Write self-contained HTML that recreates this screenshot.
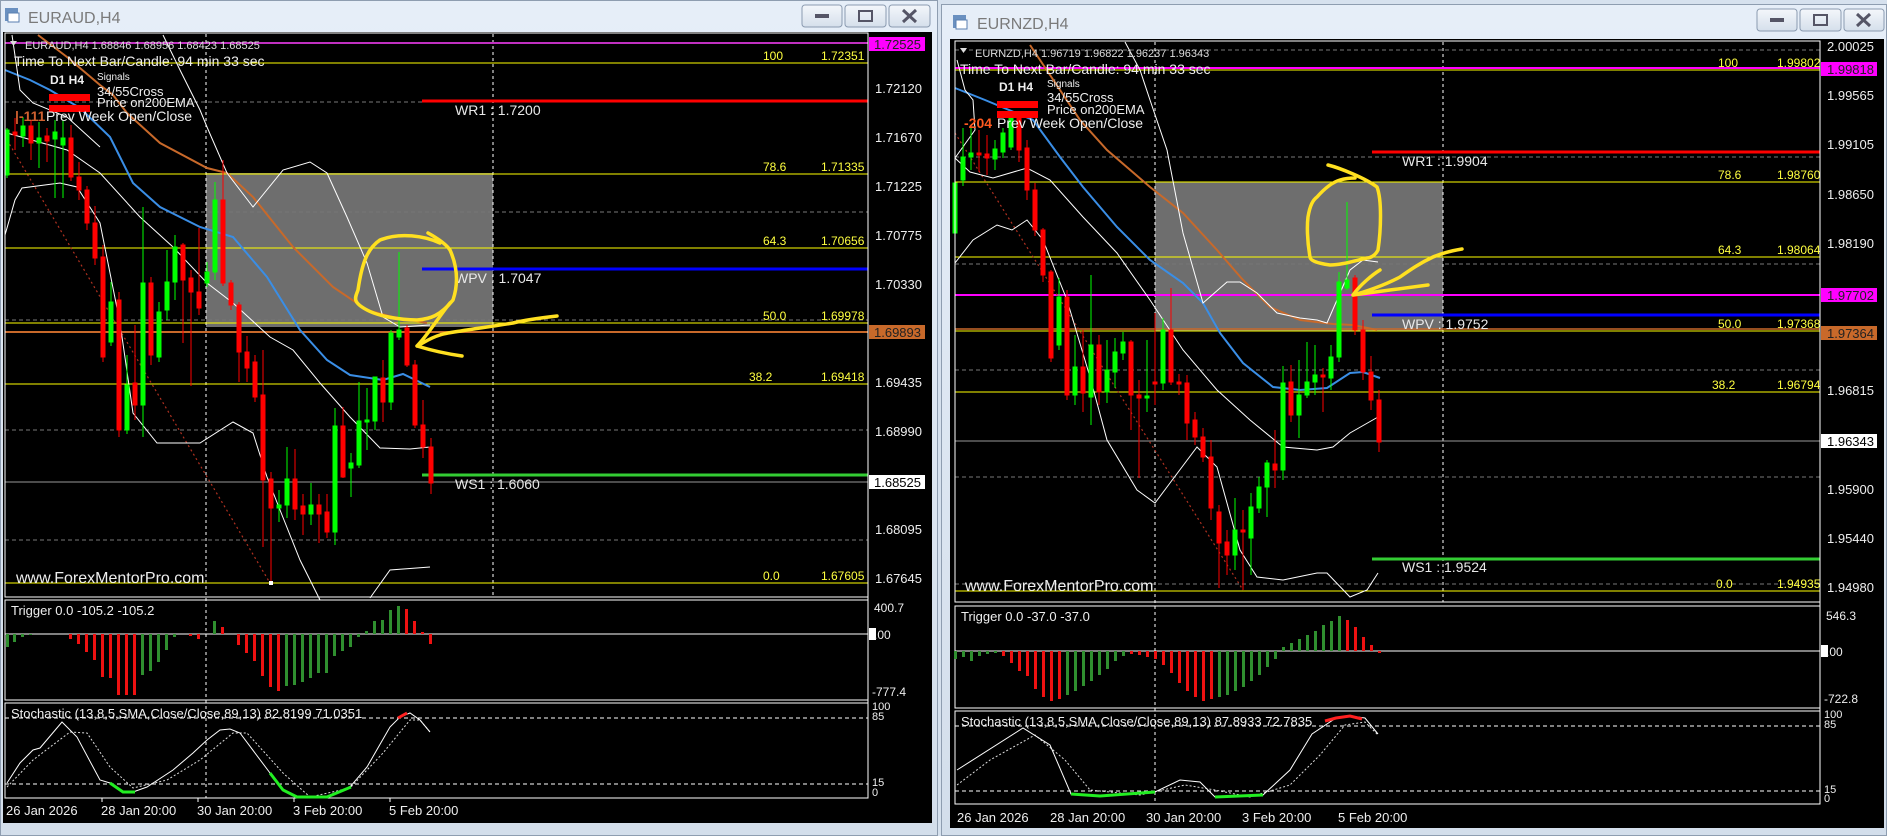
<!DOCTYPE html>
<html><head><meta charset="utf-8"><style>
html,body{margin:0;padding:0;background:#d6e1ee;}
svg{display:block;font-family:"Liberation Sans",sans-serif;}
</style></head><body>
<svg width="1887" height="836" viewBox="0 0 1887 836" xmlns="http://www.w3.org/2000/svg">
<defs>
<linearGradient id="tb" x1="0" y1="0" x2="0" y2="1"><stop offset="0" stop-color="#e6eef8"/><stop offset="1" stop-color="#d3deeb"/></linearGradient>
<linearGradient id="btn" x1="0" y1="0" x2="0" y2="1"><stop offset="0" stop-color="#f4f7fb"/><stop offset="1" stop-color="#d5dfeb"/></linearGradient>
</defs>
<rect width="1887" height="836" fill="#d6e1ee"/>
<!-- LEFT WINDOW -->
<rect x="0" y="0" width="938" height="836" fill="url(#tb)"/>
<rect x="0.5" y="0.5" width="937" height="835" fill="none" stroke="#8e9db0"/>
<rect x="5" y="8" width="13" height="13" fill="#6a90c0"/><rect x="8" y="13" width="11" height="9" fill="#fff" stroke="#5a7fb0"/>
<text x="28" y="23" font-size="16" fill="#7a7a7a">EURAUD,H4</text>
<g stroke="#8b9bb0" fill="url(#btn)"><rect x="802" y="5" width="40" height="22" rx="3"/><rect x="845" y="5" width="41" height="22" rx="3"/><rect x="889" y="5" width="41" height="22" rx="3"/></g>
<rect x="815" y="14" width="14" height="4" fill="#556" /><rect x="859" y="11" width="13" height="10" fill="none" stroke="#556" stroke-width="2"/>
<path d="M903 10 L916 22 M916 10 L903 22" stroke="#556" stroke-width="3"/>
<rect x="3" y="32" width="929" height="791" fill="#000"/>

<!-- left main chart -->
<rect x="206" y="173" width="287" height="154" fill="#6e6e6e"/>
<g stroke="#777" stroke-dasharray="4,3" stroke-width="1"><line x1="5" y1="102" x2="868" y2="102"/><line x1="5" y1="212" x2="868" y2="212"/><line x1="5" y1="320" x2="868" y2="320"/><line x1="5" y1="430" x2="868" y2="430"/><line x1="5" y1="540" x2="868" y2="540"/></g>
<g stroke="#fff" stroke-dasharray="3,3"><line x1="206" y1="34" x2="206" y2="798"/><line x1="493" y1="34" x2="493" y2="597"/></g>
<g stroke="#ffff00" stroke-width="1"><line x1="5" y1="63" x2="868" y2="63"/><line x1="5" y1="174" x2="868" y2="174"/><line x1="5" y1="248" x2="868" y2="248"/><line x1="5" y1="323" x2="868" y2="323"/><line x1="5" y1="384" x2="868" y2="384"/><line x1="5" y1="583" x2="868" y2="583"/></g>
<line x1="5" y1="43" x2="868" y2="43" stroke="#c030c0" stroke-width="2"/>
<line x1="5" y1="332" x2="868" y2="332" stroke="#c8692a" stroke-width="2"/>
<line x1="5" y1="482" x2="868" y2="482" stroke="#999" stroke-width="1"/>
<line x1="422" y1="101" x2="868" y2="101" stroke="#ff0000" stroke-width="3"/>
<line x1="422" y1="269" x2="868" y2="269" stroke="#0000ff" stroke-width="3"/>
<line x1="422" y1="475" x2="868" y2="475" stroke="#33cc33" stroke-width="3"/>
<g font-size="12" fill="#ffff40"><text x="763" y="60">100</text><text x="821" y="60">1.72351</text><text x="763" y="171">78.6</text><text x="821" y="171">1.71335</text><text x="763" y="245">64.3</text><text x="821" y="245">1.70656</text><text x="763" y="320">50.0</text><text x="821" y="320">1.69978</text><text x="749" y="381">38.2</text><text x="821" y="381">1.69418</text><text x="763" y="580">0.0</text><text x="821" y="580">1.67605</text></g>
<g font-size="14" fill="#e8e8e8"><text x="455" y="115">WR1 : 1.7200</text><text x="455" y="283">WPV : 1.7047</text><text x="455" y="489">WS1 : 1.6060</text></g>
<!-- indicators left -->
<polyline fill="none" stroke="#b03020" stroke-width="1.2" stroke-dasharray="2,3" points="7,140 270,583"/>
<polyline fill="none" stroke="#c8692a" stroke-width="2" points="38,35 67,57 100,85 113,95 127,113 160,143 207,168 227,173 253,197 293,247 333,287 367,310 393,317 427,323"/>
<polyline fill="none" stroke="#3a8ee6" stroke-width="2" points="5,70 30,80 50,90 80,108 110,137 133,183 160,207 200,227 233,237 267,277 300,330 327,360 350,375 383,380 403,374 430,387"/>
<g fill="none" stroke="#fff" stroke-width="1">
<polyline points="5,235 15,200 22,188 60,183 77,187 100,223 120,323 133,413 157,443 200,443 233,422 253,433 267,477 280,510 300,560 320,600"/>
<polyline points="370,598 390,570 430,567"/>
<polyline points="7,133 67,150 100,173 140,217 173,247 207,283 233,303 270,337 293,350 320,383 350,417 380,448 410,449 430,447"/>
<polyline points="12,35 20,90 33,103 67,117 100,147"/>
<polyline points="163,35 180,70 200,110 207,127 227,173 253,207 283,170 310,162 327,173 347,217 367,263 383,317 400,327 430,325"/>
</g>
<!-- left candles -->
<g stroke="#00ff00" fill="#00ff00">
<line x1="7" y1="128" x2="7" y2="178"/><rect x="5" y="130" width="4" height="45"/>
<line x1="23" y1="117" x2="23" y2="147"/><rect x="21" y="126" width="4" height="10"/>
<line x1="39" y1="122" x2="39" y2="168"/><rect x="37" y="138" width="4" height="5"/>
<line x1="55" y1="120" x2="55" y2="198"/><rect x="53" y="132" width="4" height="7"/>
<line x1="63" y1="120" x2="63" y2="198"/><rect x="61" y="138" width="4" height="7"/>
<line x1="111" y1="282" x2="111" y2="346"/><rect x="109" y="302" width="4" height="40"/>
<line x1="127" y1="355" x2="127" y2="434"/><rect x="125" y="385" width="4" height="45"/>
<line x1="143" y1="207" x2="143" y2="437"/><rect x="141" y="283" width="4" height="122"/>
<line x1="159" y1="302" x2="159" y2="362"/><rect x="157" y="312" width="4" height="45"/>
<line x1="167" y1="250" x2="167" y2="320"/><rect x="165" y="282" width="4" height="28"/>
<line x1="175" y1="235" x2="175" y2="300"/><rect x="173" y="247" width="4" height="35"/>
<line x1="207" y1="262" x2="207" y2="287"/><rect x="205" y="272" width="4" height="11"/>
<line x1="215" y1="182" x2="215" y2="280"/><rect x="213" y="200" width="4" height="72"/>
<line x1="279" y1="490" x2="279" y2="522"/><rect x="277" y="505" width="4" height="3"/>
<line x1="287" y1="447" x2="287" y2="518"/><rect x="285" y="479" width="4" height="26"/>
<line x1="311" y1="483" x2="311" y2="525"/><rect x="309" y="505" width="4" height="9"/>
<line x1="335" y1="408" x2="335" y2="545"/><rect x="333" y="426" width="4" height="106"/>
<line x1="351" y1="453" x2="351" y2="497"/><rect x="349" y="463" width="4" height="5"/>
<line x1="359" y1="382" x2="359" y2="468"/><rect x="357" y="421" width="4" height="44"/>
<line x1="367" y1="388" x2="367" y2="450"/><rect x="365" y="420" width="4" height="2"/>
<line x1="375" y1="377" x2="375" y2="430"/><rect x="373" y="377" width="4" height="44"/>
<line x1="391" y1="330" x2="391" y2="410"/><rect x="389" y="333" width="4" height="69"/>
<line x1="399" y1="252" x2="399" y2="340"/><rect x="397" y="330" width="4" height="7"/>
</g>
<g stroke="#ff0000" fill="#ff0000">
<line x1="15" y1="118" x2="15" y2="150"/><rect x="13" y="132" width="4" height="3"/>
<line x1="31" y1="120" x2="31" y2="160"/><rect x="29" y="126" width="4" height="17"/>
<line x1="47" y1="128" x2="47" y2="162"/><rect x="45" y="136" width="4" height="5"/>
<line x1="71" y1="125" x2="71" y2="181"/><rect x="69" y="138" width="4" height="39"/>
<line x1="79" y1="162" x2="79" y2="200"/><rect x="77" y="177" width="4" height="13"/>
<line x1="87" y1="186" x2="87" y2="230"/><rect x="85" y="190" width="4" height="33"/>
<line x1="95" y1="206" x2="95" y2="265"/><rect x="93" y="223" width="4" height="35"/>
<line x1="103" y1="245" x2="103" y2="362"/><rect x="101" y="257" width="4" height="100"/>
<line x1="119" y1="292" x2="119" y2="437"/><rect x="117" y="300" width="4" height="130"/>
<line x1="135" y1="325" x2="135" y2="420"/><rect x="133" y="383" width="4" height="22"/>
<line x1="151" y1="277" x2="151" y2="365"/><rect x="149" y="283" width="4" height="72"/>
<line x1="183" y1="243" x2="183" y2="343"/><rect x="181" y="245" width="4" height="35"/>
<line x1="191" y1="270" x2="191" y2="386"/><rect x="189" y="278" width="4" height="14"/>
<line x1="199" y1="228" x2="199" y2="315"/><rect x="197" y="292" width="4" height="16"/>
<line x1="223" y1="160" x2="223" y2="286"/><rect x="221" y="200" width="4" height="83"/>
<line x1="231" y1="280" x2="231" y2="310"/><rect x="229" y="283" width="4" height="22"/>
<line x1="239" y1="302" x2="239" y2="382"/><rect x="237" y="305" width="4" height="47"/>
<line x1="247" y1="336" x2="247" y2="382"/><rect x="245" y="352" width="4" height="16"/>
<line x1="255" y1="355" x2="255" y2="402"/><rect x="253" y="362" width="4" height="35"/>
<line x1="263" y1="350" x2="263" y2="547"/><rect x="261" y="395" width="4" height="85"/>
<line x1="271" y1="472" x2="271" y2="583"/><rect x="269" y="479" width="4" height="29"/>
<line x1="295" y1="449" x2="295" y2="520"/><rect x="293" y="479" width="4" height="30"/>
<line x1="303" y1="494" x2="303" y2="535"/><rect x="301" y="506" width="4" height="8"/>
<line x1="319" y1="494" x2="319" y2="543"/><rect x="317" y="505" width="4" height="9"/>
<line x1="327" y1="494" x2="327" y2="538"/><rect x="325" y="512" width="4" height="20"/>
<line x1="343" y1="407" x2="343" y2="478"/><rect x="341" y="426" width="4" height="51"/>
<line x1="383" y1="360" x2="383" y2="422"/><rect x="381" y="378" width="4" height="24"/>
<line x1="407" y1="325" x2="407" y2="367"/><rect x="405" y="328" width="4" height="37"/>
<line x1="415" y1="360" x2="415" y2="428"/><rect x="413" y="365" width="4" height="60"/>
<line x1="423" y1="400" x2="423" y2="458"/><rect x="421" y="425" width="4" height="22"/>
<line x1="431" y1="438" x2="431" y2="494"/><rect x="429" y="447" width="4" height="36"/>
</g>
<rect x="269" y="581" width="4" height="4" fill="#fff"/>
<!-- annotations left -->
<g fill="none" stroke="#ffe020" stroke-width="3.5" stroke-linecap="round" stroke-linejoin="round">
<path d="M440 243 C425 236 400 232 380 240 C368 248 362 262 358 290 C355 298 352 302 367 310 C378 316 400 320 417 320 C430 319 440 316 453 300 C458 285 458 268 450 250 C446 244 437 238 428 233"/>
<path d="M557 316 C540 318 525 320 513 323 C495 326 480 328 467 330 C455 332 445 333 440 335 C430 338 425 342 417 346 M417 346 C428 335 440 315 450 303 M417 346 C430 350 448 354 462 356"/>
</g>
<!-- left text overlay -->
<path d="M10 41 L17 41 L13.5 46 Z" fill="#ddd"/>
<text x="25" y="49" font-size="11" fill="#ddd">EURAUD,H4  1.68846 1.68956 1.68423 1.68525</text>
<text x="14" y="66" font-size="14" fill="#eee">Time To Next Bar/Candle: 94 min 33 sec</text>
<text x="50" y="84" font-size="12" font-weight="bold" fill="#eee">D1  H4</text>
<text x="97" y="80" font-size="10" fill="#eee">Signals</text>
<text x="97" y="96" font-size="13" fill="#eee">34/55Cross</text>
<text x="97" y="107" font-size="13" fill="#eee">Price on200EMA</text>
<rect x="49" y="94" width="41" height="7" fill="#ff0000"/><rect x="49" y="105" width="41" height="7" fill="#ff0000"/>
<text x="15" y="121" font-size="14" font-weight="bold" fill="#d06030">|-111</text>
<text x="46" y="121" font-size="14" fill="#eee">Prev Week Open/Close</text>
<text x="16" y="583" font-size="16" fill="#eee">www.ForexMentorPro.com</text>
<!-- left axis -->
<line x1="868" y1="34" x2="868" y2="798" stroke="#fff"/>
<g font-size="13" fill="#eee"><text x="875" y="93">1.72120</text><text x="875" y="142">1.71670</text><text x="875" y="191">1.71225</text><text x="875" y="240">1.70775</text><text x="875" y="289">1.70330</text><text x="875" y="387">1.69435</text><text x="875" y="436">1.68990</text><text x="875" y="534">1.68095</text><text x="875" y="583">1.67645</text></g>
<rect x="869" y="37" width="56" height="14" fill="#ff00ff"/><text x="874" y="49" font-size="13" fill="#222">1.72525</text>
<rect x="869" y="325" width="56" height="14" fill="#c8692a"/><text x="874" y="337" font-size="13" fill="#222">1.69893</text>
<rect x="869" y="475" width="56" height="14" fill="#fff"/><text x="874" y="487" font-size="13" fill="#000">1.68525</text>
<rect x="5" y="33" width="863" height="564" fill="none" stroke="#fff"/>
<!-- left trigger -->
<rect x="5" y="600" width="863" height="100" fill="none" stroke="#fff"/>
<line x1="5" y1="634" x2="868" y2="634" stroke="#fff"/>
<text x="11" y="615" font-size="13" fill="#eee">Trigger 0.0 -105.2 -105.2</text>
<text x="874" y="612" font-size="12" fill="#eee">400.7</text><rect x="869" y="628" width="7" height="12" fill="#fff"/><text x="874" y="639" font-size="12" fill="#eee">.00</text><text x="872" y="696" font-size="12" fill="#eee">-777.4</text>
<g fill="#2f8f2f"><rect x="6" y="634" width="3" height="13"/><rect x="13" y="634" width="3" height="8"/><rect x="21" y="634" width="3" height="3"/><rect x="29" y="634" width="3" height="1"/><rect x="141" y="634" width="3" height="41"/><rect x="149" y="634" width="3" height="37"/><rect x="157" y="634" width="3" height="28"/><rect x="165" y="634" width="3" height="16"/><rect x="173" y="634" width="3" height="3"/><rect x="213" y="621" width="3" height="13"/><rect x="285" y="634" width="3" height="52"/><rect x="293" y="634" width="3" height="51"/><rect x="301" y="634" width="3" height="48"/><rect x="309" y="634" width="3" height="44"/><rect x="317" y="634" width="3" height="39"/><rect x="325" y="634" width="3" height="39"/><rect x="333" y="634" width="3" height="22"/><rect x="341" y="634" width="3" height="17"/><rect x="349" y="634" width="3" height="13"/><rect x="357" y="634" width="3" height="3"/><rect x="365" y="631" width="3" height="3"/><rect x="373" y="621" width="3" height="13"/><rect x="381" y="620" width="3" height="14"/><rect x="389" y="610" width="3" height="24"/><rect x="397" y="606" width="3" height="28"/></g>
<g fill="#ee1111"><rect x="69" y="634" width="3" height="5"/><rect x="77" y="634" width="3" height="10"/><rect x="85" y="634" width="3" height="18"/><rect x="93" y="634" width="3" height="26"/><rect x="101" y="634" width="3" height="43"/><rect x="109" y="634" width="3" height="44"/><rect x="117" y="634" width="3" height="61"/><rect x="125" y="634" width="3" height="61"/><rect x="133" y="634" width="3" height="61"/><rect x="189" y="634" width="3" height="2"/><rect x="197" y="634" width="3" height="5"/><rect x="221" y="627" width="3" height="7"/><rect x="237" y="634" width="3" height="11"/><rect x="245" y="634" width="3" height="19"/><rect x="253" y="634" width="3" height="27"/><rect x="261" y="634" width="3" height="42"/><rect x="269" y="634" width="3" height="53"/><rect x="277" y="634" width="3" height="57"/><rect x="405" y="609" width="3" height="25"/><rect x="413" y="621" width="3" height="13"/><rect x="421" y="632" width="3" height="2"/><rect x="429" y="634" width="3" height="10"/></g>
<!-- left stoch -->
<rect x="5" y="703" width="863" height="95" fill="none" stroke="#fff"/>
<g stroke="#fff" stroke-dasharray="4,3"><line x1="5" y1="718" x2="868" y2="718"/><line x1="5" y1="784" x2="868" y2="784"/></g>
<text x="11" y="718" font-size="13" fill="#eee">Stochastic (13,8,5,SMA,Close/Close,89,13) 82.8199 71.0351</text>
<g font-size="11" fill="#eee"><text x="872" y="710">100</text><text x="872" y="720">85</text><text x="872" y="786">15</text><text x="872" y="796">0</text></g>
<polyline fill="none" stroke="#ddd" stroke-dasharray="2,2" points="7,787 33,760 70,732 87,733 110,767 133,788 167,780 200,760 233,733 247,733 283,773 310,797 350,788 383,753 410,720 420,720 430,732"/>
<polyline fill="none" stroke="#fff" points="7,783 20,763 33,750 40,748 62,722 77,737 100,780 110,783 123,792 133,792 147,787 173,770 193,753 207,740 220,730 230,729 240,733 270,773 283,790 297,797 327,797 350,787 367,767 390,727 400,717 410,713 420,720 430,732"/>
<polyline fill="none" stroke="#22ee22" stroke-width="3" points="110,783 123,792 135,792"/>
<polyline fill="none" stroke="#22ee22" stroke-width="3" points="270,773 283,790 297,797 327,797 351,787"/>
<polyline fill="none" stroke="#ff2020" stroke-width="3" points="398,718 407,713"/>
<g font-size="13" fill="#eee"><text x="6" y="815">26 Jan 2026</text><text x="101" y="815">28 Jan 20:00</text><text x="197" y="815">30 Jan 20:00</text><text x="293" y="815">3 Feb 20:00</text><text x="389" y="815">5 Feb 20:00</text></g>
<g stroke="#fff"><line x1="102" y1="798" x2="102" y2="802"/><line x1="198" y1="798" x2="198" y2="802"/><line x1="294" y1="798" x2="294" y2="802"/><line x1="390" y1="798" x2="390" y2="802"/></g>

<!-- RIGHT WINDOW -->
<rect x="941" y="4" width="946" height="832" fill="url(#tb)"/>
<rect x="941.5" y="4.5" width="945" height="831" fill="none" stroke="#8e9db0"/>
<rect x="953" y="15" width="13" height="13" fill="#6a90c0"/><rect x="956" y="20" width="11" height="9" fill="#fff" stroke="#5a7fb0"/>
<text x="977" y="29" font-size="16" fill="#7a7a7a">EURNZD,H4</text>
<g stroke="#8b9bb0" fill="url(#btn)"><rect x="1757" y="9" width="40" height="22" rx="3"/><rect x="1800" y="9" width="41" height="22" rx="3"/><rect x="1844" y="9" width="40" height="22" rx="3"/></g>
<rect x="1770" y="18" width="14" height="4" fill="#556"/><rect x="1814" y="15" width="13" height="10" fill="none" stroke="#556" stroke-width="2"/>
<path d="M1857 14 L1870 26 M1870 14 L1857 26" stroke="#556" stroke-width="3"/>
<rect x="950" y="39" width="934" height="789" fill="#000"/>
<rect x="1155" y="182" width="288" height="149" fill="#6e6e6e"/>
<g stroke="#777" stroke-dasharray="4,3"><line x1="955" y1="50" x2="1820" y2="50"/><line x1="955" y1="157" x2="1820" y2="157"/><line x1="955" y1="264" x2="1820" y2="264"/><line x1="955" y1="370" x2="1820" y2="370"/><line x1="955" y1="477" x2="1820" y2="477"/><line x1="955" y1="584" x2="1820" y2="584"/></g>
<g stroke="#fff" stroke-dasharray="3,3"><line x1="1155" y1="42" x2="1155" y2="804"/><line x1="1443" y1="42" x2="1443" y2="602"/></g>
<g stroke="#ffff00"><line x1="955" y1="70" x2="1820" y2="70"/><line x1="955" y1="182" x2="1820" y2="182"/><line x1="955" y1="257" x2="1820" y2="257"/><line x1="955" y1="331" x2="1820" y2="331"/><line x1="955" y1="392" x2="1820" y2="392"/><line x1="955" y1="591" x2="1820" y2="591"/></g>
<line x1="955" y1="68" x2="1820" y2="68" stroke="#ff00ff" stroke-width="2"/>
<line x1="955" y1="295" x2="1820" y2="295" stroke="#ff00ff" stroke-width="2"/>
<line x1="955" y1="329" x2="1820" y2="329" stroke="#c8692a" stroke-width="1.5"/>
<line x1="955" y1="441" x2="1820" y2="441" stroke="#999"/>
<line x1="1372" y1="152" x2="1820" y2="152" stroke="#ff0000" stroke-width="3"/>
<line x1="1372" y1="315" x2="1820" y2="315" stroke="#0000ff" stroke-width="3"/>
<line x1="1372" y1="559" x2="1820" y2="559" stroke="#33cc33" stroke-width="3"/>
<g font-size="12" fill="#ffff40"><text x="1718" y="67">100</text><text x="1777" y="67">1.99802</text><text x="1718" y="179">78.6</text><text x="1777" y="179">1.98760</text><text x="1718" y="254">64.3</text><text x="1777" y="254">1.98064</text><text x="1718" y="328">50.0</text><text x="1777" y="328">1.97368</text><text x="1712" y="389">38.2</text><text x="1777" y="389">1.96794</text><text x="1716" y="588">0.0</text><text x="1777" y="588">1.94935</text></g>
<g font-size="14" fill="#e8e8e8"><text x="1402" y="166">WR1 : 1.9904</text><text x="1402" y="329">WPV : 1.9752</text><text x="1402" y="572">WS1 : 1.9524</text></g>
<polyline fill="none" stroke="#b03020" stroke-width="1.2" stroke-dasharray="2,3" points="955,133 1243,590"/>
<polyline fill="none" stroke="#c8692a" stroke-width="2" points="1030,45 1060,90 1080,120 1107,150 1150,187 1183,213 1217,250 1243,280 1270,307 1300,320 1333,324 1353,325 1377,330"/>
<polyline fill="none" stroke="#3a8ee6" stroke-width="2" points="955,88 985,100 1033,120 1060,157 1083,187 1117,227 1150,260 1183,283 1203,303 1220,333 1243,363 1273,387 1300,390 1327,388 1350,373 1363,372 1380,378"/>
<g fill="none" stroke="#fff">
<polyline points="957,60 965,90 973,100 975,130 955,158"/>
<polyline points="955,158 970,172 993,178 1027,168 1050,180 1083,217 1117,253 1150,300 1183,350 1217,390 1250,420 1283,447 1317,450 1333,447 1350,433 1378,417"/>
<polyline points="955,263 973,240 997,225 1012,230 1027,220 1043,240 1067,300 1090,377 1107,440 1137,490 1155,503 1170,483 1197,447 1217,467 1240,550 1257,577 1283,580 1317,573 1327,573 1350,597 1367,590 1378,573"/>
<polyline points="1125,42 1140,70 1150,100 1167,150 1183,233 1203,303 1227,282 1240,282 1257,293 1277,313 1300,318 1317,320 1327,323 1337,300 1350,270 1363,260 1378,262"/>
</g>
<g stroke="#00ff00" fill="#00ff00">
<line x1="955" y1="160" x2="955" y2="240"/><rect x="953" y="183" width="4" height="50"/>
<line x1="963" y1="128" x2="963" y2="186"/><rect x="961" y="157" width="4" height="23"/>
<line x1="971" y1="125" x2="971" y2="170"/><rect x="969" y="153" width="4" height="4"/>
<line x1="995" y1="140" x2="995" y2="170"/><rect x="993" y="149" width="4" height="10"/>
<line x1="1003" y1="128" x2="1003" y2="158"/><rect x="1001" y="133" width="4" height="19"/>
<line x1="1011" y1="112" x2="1011" y2="150"/><rect x="1009" y="117" width="4" height="30"/>
<line x1="1059" y1="278" x2="1059" y2="350"/><rect x="1057" y="297" width="4" height="48"/>
<line x1="1075" y1="335" x2="1075" y2="405"/><rect x="1073" y="367" width="4" height="28"/>
<line x1="1091" y1="275" x2="1091" y2="425"/><rect x="1089" y="345" width="4" height="52"/>
<line x1="1107" y1="340" x2="1107" y2="403"/><rect x="1105" y="370" width="4" height="22"/>
<line x1="1115" y1="338" x2="1115" y2="388"/><rect x="1113" y="352" width="4" height="20"/>
<line x1="1123" y1="332" x2="1123" y2="360"/><rect x="1121" y="342" width="4" height="11"/>
<line x1="1147" y1="340" x2="1147" y2="412"/><rect x="1145" y="396" width="4" height="2"/>
<line x1="1163" y1="318" x2="1163" y2="390"/><rect x="1161" y="330" width="4" height="53"/>
<line x1="1235" y1="498" x2="1235" y2="570"/><rect x="1233" y="530" width="4" height="25"/>
<line x1="1251" y1="493" x2="1251" y2="575"/><rect x="1249" y="507" width="4" height="31"/>
<line x1="1259" y1="477" x2="1259" y2="513"/><rect x="1257" y="487" width="4" height="21"/>
<line x1="1267" y1="460" x2="1267" y2="517"/><rect x="1265" y="463" width="4" height="24"/>
<line x1="1283" y1="366" x2="1283" y2="480"/><rect x="1281" y="383" width="4" height="87"/>
<line x1="1299" y1="360" x2="1299" y2="438"/><rect x="1297" y="395" width="4" height="20"/>
<line x1="1307" y1="342" x2="1307" y2="398"/><rect x="1305" y="382" width="4" height="13"/>
<line x1="1315" y1="345" x2="1315" y2="395"/><rect x="1313" y="375" width="4" height="7"/>
<line x1="1331" y1="345" x2="1331" y2="390"/><rect x="1329" y="357" width="4" height="21"/>
<line x1="1339" y1="272" x2="1339" y2="362"/><rect x="1337" y="282" width="4" height="75"/>
<line x1="1347" y1="202" x2="1347" y2="290"/><rect x="1345" y="280" width="4" height="8"/>
</g>
<g stroke="#ff0000" fill="#ff0000">
<line x1="979" y1="130" x2="979" y2="172"/><rect x="977" y="153" width="4" height="2"/>
<line x1="987" y1="135" x2="987" y2="175"/><rect x="985" y="154" width="4" height="4"/>
<line x1="1019" y1="112" x2="1019" y2="162"/><rect x="1017" y="117" width="4" height="33"/>
<line x1="1027" y1="140" x2="1027" y2="200"/><rect x="1025" y="148" width="4" height="42"/>
<line x1="1035" y1="183" x2="1035" y2="236"/><rect x="1033" y="190" width="4" height="40"/>
<line x1="1043" y1="228" x2="1043" y2="282"/><rect x="1041" y="230" width="4" height="45"/>
<line x1="1051" y1="270" x2="1051" y2="362"/><rect x="1049" y="272" width="4" height="86"/>
<line x1="1067" y1="290" x2="1067" y2="400"/><rect x="1065" y="297" width="4" height="98"/>
<line x1="1083" y1="330" x2="1083" y2="412"/><rect x="1081" y="367" width="4" height="26"/>
<line x1="1099" y1="335" x2="1099" y2="405"/><rect x="1097" y="345" width="4" height="47"/>
<line x1="1131" y1="340" x2="1131" y2="430"/><rect x="1129" y="342" width="4" height="53"/>
<line x1="1139" y1="380" x2="1139" y2="478"/><rect x="1137" y="395" width="4" height="3"/>
<line x1="1155" y1="313" x2="1155" y2="405"/><rect x="1153" y="382" width="4" height="2"/>
<line x1="1171" y1="288" x2="1171" y2="385"/><rect x="1169" y="330" width="4" height="52"/>
<line x1="1179" y1="374" x2="1179" y2="395"/><rect x="1177" y="382" width="4" height="2"/>
<line x1="1187" y1="375" x2="1187" y2="440"/><rect x="1185" y="383" width="4" height="40"/>
<line x1="1195" y1="412" x2="1195" y2="445"/><rect x="1193" y="420" width="4" height="17"/>
<line x1="1203" y1="428" x2="1203" y2="462"/><rect x="1201" y="437" width="4" height="20"/>
<line x1="1211" y1="440" x2="1211" y2="520"/><rect x="1209" y="457" width="4" height="51"/>
<line x1="1219" y1="505" x2="1219" y2="588"/><rect x="1217" y="512" width="4" height="31"/>
<line x1="1227" y1="530" x2="1227" y2="575"/><rect x="1225" y="542" width="4" height="13"/>
<line x1="1243" y1="510" x2="1243" y2="590"/><rect x="1241" y="530" width="4" height="2"/>
<line x1="1275" y1="430" x2="1275" y2="488"/><rect x="1273" y="464" width="4" height="6"/>
<line x1="1291" y1="365" x2="1291" y2="422"/><rect x="1289" y="382" width="4" height="33"/>
<line x1="1323" y1="368" x2="1323" y2="412"/><rect x="1321" y="375" width="4" height="2"/>
<line x1="1355" y1="275" x2="1355" y2="335"/><rect x="1353" y="278" width="4" height="52"/>
<line x1="1363" y1="320" x2="1363" y2="380"/><rect x="1361" y="330" width="4" height="42"/>
<line x1="1371" y1="356" x2="1371" y2="410"/><rect x="1369" y="372" width="4" height="28"/>
<line x1="1379" y1="390" x2="1379" y2="452"/><rect x="1377" y="400" width="4" height="42"/>
</g>
<g fill="none" stroke="#ffe020" stroke-width="3.5" stroke-linecap="round" stroke-linejoin="round">
<path d="M1328 165 C1340 168 1365 178 1377 187 C1382 200 1381 230 1378 250 C1375 256 1370 258 1367 258 C1350 262 1340 265 1330 265 C1315 263 1310 260 1310 257 C1307 240 1307 225 1308 217 C1310 205 1313 200 1317 197 C1325 188 1333 182 1340 180 C1347 178 1352 178 1355 178"/>
<path d="M1462 249 C1450 251 1440 254 1433 257 C1420 263 1410 270 1400 277 C1385 285 1365 292 1353 295 M1353 295 C1360 285 1372 275 1380 270 M1353 295 C1375 292 1405 288 1428 285"/>
</g>
<path d="M960 48 L967 48 L963.5 53 Z" fill="#ddd"/>
<text x="975" y="57" font-size="11" fill="#ddd">EURNZD,H4  1.96719 1.96822 1.96237 1.96343</text>
<text x="960" y="74" font-size="14" fill="#eee">Time To Next Bar/Candle: 94 min 33 sec</text>
<text x="999" y="91" font-size="12" font-weight="bold" fill="#eee">D1  H4</text>
<text x="1047" y="87" font-size="10" fill="#eee">Signals</text>
<text x="1047" y="102" font-size="13" fill="#eee">34/55Cross</text>
<text x="1047" y="114" font-size="13" fill="#eee">Price on200EMA</text>
<rect x="997" y="101" width="41" height="7" fill="#ff0000"/><rect x="997" y="111" width="41" height="7" fill="#ff0000"/>
<text x="964" y="128" font-size="14" font-weight="bold" fill="#ff5a20">-204</text>
<text x="997" y="128" font-size="14" fill="#eee">Prev Week Open/Close</text>
<text x="965" y="591" font-size="16" fill="#eee">www.ForexMentorPro.com</text>
<line x1="1820" y1="42" x2="1820" y2="804" stroke="#fff"/>
<g font-size="13" fill="#eee"><text x="1827" y="51">2.00025</text><text x="1827" y="100">1.99565</text><text x="1827" y="149">1.99105</text><text x="1827" y="199">1.98650</text><text x="1827" y="248">1.98190</text><text x="1827" y="395">1.96815</text><text x="1827" y="494">1.95900</text><text x="1827" y="543">1.95440</text><text x="1827" y="592">1.94980</text></g>
<rect x="1821" y="62" width="56" height="14" fill="#ff00ff"/><text x="1827" y="74" font-size="13" fill="#222">1.99818</text>
<rect x="1821" y="288" width="56" height="14" fill="#ff00ff"/><text x="1827" y="300" font-size="13" fill="#222">1.97702</text>
<rect x="1821" y="326" width="56" height="14" fill="#c8692a"/><text x="1827" y="338" font-size="13" fill="#222">1.97364</text>
<rect x="1821" y="434" width="56" height="14" fill="#fff"/><text x="1827" y="446" font-size="13" fill="#000">1.96343</text>
<rect x="955" y="41" width="865" height="561" fill="none" stroke="#fff"/>
<!-- right trigger -->
<rect x="955" y="606" width="865" height="102" fill="none" stroke="#fff"/>
<line x1="955" y1="651" x2="1820" y2="651" stroke="#fff"/>
<text x="961" y="621" font-size="13" fill="#eee">Trigger 0.0 -37.0 -37.0</text>
<text x="1826" y="620" font-size="12" fill="#eee">546.3</text><rect x="1821" y="645" width="7" height="12" fill="#fff"/><text x="1826" y="656" font-size="12" fill="#eee">.00</text><text x="1824" y="703" font-size="12" fill="#eee">-722.8</text>
<g fill="#2f8f2f"><rect x="954" y="651" width="3" height="8"/><rect x="962" y="651" width="3" height="6"/><rect x="970" y="651" width="3" height="10"/><rect x="978" y="651" width="3" height="5"/><rect x="986" y="651" width="3" height="3"/><rect x="994" y="651" width="3" height="2"/><rect x="1066" y="651" width="3" height="44"/><rect x="1074" y="651" width="3" height="40"/><rect x="1082" y="651" width="3" height="35"/><rect x="1090" y="651" width="3" height="30"/><rect x="1098" y="651" width="3" height="24"/><rect x="1106" y="651" width="3" height="18"/><rect x="1114" y="651" width="3" height="10"/><rect x="1122" y="651" width="3" height="5"/><rect x="1218" y="651" width="3" height="46"/><rect x="1226" y="651" width="3" height="44"/><rect x="1234" y="651" width="3" height="40"/><rect x="1242" y="651" width="3" height="36"/><rect x="1250" y="651" width="3" height="30"/><rect x="1258" y="651" width="3" height="24"/><rect x="1266" y="651" width="3" height="16"/><rect x="1274" y="651" width="3" height="8"/><rect x="1282" y="647" width="3" height="4"/><rect x="1290" y="643" width="3" height="8"/><rect x="1298" y="639" width="3" height="12"/><rect x="1306" y="635" width="3" height="16"/><rect x="1314" y="631" width="3" height="20"/><rect x="1322" y="625" width="3" height="26"/><rect x="1330" y="621" width="3" height="30"/><rect x="1338" y="616" width="3" height="35"/></g>
<g fill="#ee1111"><rect x="1002" y="651" width="3" height="5"/><rect x="1010" y="651" width="3" height="12"/><rect x="1018" y="651" width="3" height="20"/><rect x="1026" y="651" width="3" height="25"/><rect x="1034" y="651" width="3" height="38"/><rect x="1042" y="651" width="3" height="46"/><rect x="1050" y="651" width="3" height="50"/><rect x="1058" y="651" width="3" height="48"/><rect x="1130" y="651" width="3" height="3"/><rect x="1138" y="651" width="3" height="4"/><rect x="1146" y="651" width="3" height="6"/><rect x="1154" y="651" width="3" height="8"/><rect x="1162" y="651" width="3" height="14"/><rect x="1170" y="651" width="3" height="22"/><rect x="1178" y="651" width="3" height="32"/><rect x="1186" y="651" width="3" height="40"/><rect x="1194" y="651" width="3" height="46"/><rect x="1202" y="651" width="3" height="50"/><rect x="1210" y="651" width="3" height="48"/><rect x="1346" y="620" width="3" height="31"/><rect x="1354" y="627" width="3" height="24"/><rect x="1362" y="637" width="3" height="14"/><rect x="1370" y="645" width="3" height="6"/><rect x="1378" y="651" width="3" height="2"/></g>
<!-- right stoch -->
<rect x="955" y="711" width="865" height="93" fill="none" stroke="#fff"/>
<g stroke="#fff" stroke-dasharray="4,3"><line x1="955" y1="726" x2="1820" y2="726"/><line x1="955" y1="791" x2="1820" y2="791"/></g>
<text x="961" y="726" font-size="13" fill="#eee">Stochastic (13,8,5,SMA,Close/Close,89,13) 87.8933 72.7835</text>
<g font-size="11" fill="#eee"><text x="1824" y="718">100</text><text x="1824" y="728">85</text><text x="1824" y="793">15</text><text x="1824" y="802">0</text></g>
<polyline fill="none" stroke="#ddd" stroke-dasharray="2,2" points="957,785 990,760 1035,735 1065,760 1090,790 1140,795 1185,785 1215,790 1250,797 1290,785 1320,755 1345,725 1365,722 1378,735"/>
<polyline fill="none" stroke="#fff" points="957,770 1023,728 1050,745 1071,794 1100,796 1155,792 1180,780 1200,782 1215,797 1263,795 1290,770 1312,734 1336,718 1350,716 1365,718 1378,734"/>
<polyline fill="none" stroke="#22ee22" stroke-width="3" points="1071,794 1100,796 1155,792"/>
<polyline fill="none" stroke="#22ee22" stroke-width="3" points="1215,797 1263,795"/>
<polyline fill="none" stroke="#ff2020" stroke-width="3" points="1325,721 1336,718 1350,716 1362,719"/>
<g font-size="13" fill="#eee"><text x="957" y="822">26 Jan 2026</text><text x="1050" y="822">28 Jan 20:00</text><text x="1146" y="822">30 Jan 20:00</text><text x="1242" y="822">3 Feb 20:00</text><text x="1338" y="822">5 Feb 20:00</text></g>
</svg>
</body></html>
